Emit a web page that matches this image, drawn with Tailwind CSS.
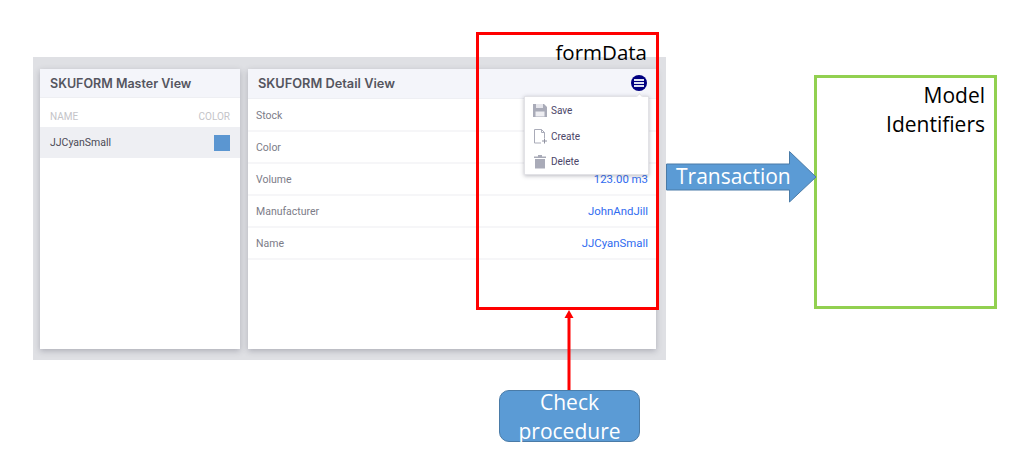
<!DOCTYPE html>
<html lang="en">
<head>
  <meta charset="UTF-8" />
  <title>SKUFORM</title>
  <script src="https://cdn.jsdelivr.net/npm/@tailwindcss/browser@4"></script>
</head>
<body class="bg-white">
  <div class="relative w-[1033px] h-[464px] overflow-hidden font-['Roboto',sans-serif]">

    <!-- screenshot panel -->
    <div class="absolute left-[33px] top-[57px] w-[633px] h-[303px] bg-[#dfe0e4] pl-[7px] pt-[12px] flex gap-[8px]">
      <section class="w-[200px] h-[280px] bg-white shadow-[0_2px_6px_rgba(60,60,80,0.3)]">
        <h2 class="h-[29px] pt-[3px] bg-[#f4f5fa] border-b border-[#eeeff3] px-[10px] flex items-center font-['Inter',sans-serif] font-semibold text-[12.5px] text-[#55555f]">SKUFORM Master View</h2>
        <div class="h-[29px] px-[10px] flex items-end justify-between pb-[3px] text-[10px] text-[#c4c4c8]">
          <span>NAME</span><span>COLOR</span>
        </div>
        <div class="h-[31px] bg-[#eeeff3] px-[10px] flex items-center justify-between text-[10.5px] text-[#4a4a55]">
          <span>JJCyanSmall</span>
          <span class="w-4 h-4 bg-[#5b96d1]"></span>
        </div>
      </section>

      <section class="w-[408px] h-[280px] bg-white shadow-[0_2px_6px_rgba(60,60,80,0.3)]">
        <h2 class="h-[30px] bg-[#f4f5fa] border-b border-[#eeeff3] px-[10px] flex items-center font-['Inter',sans-serif] font-semibold text-[12.8px] text-[#55555f]">SKUFORM Detail View</h2>
        <div class="mt-[1px] text-[10.5px]">
          <div class="h-[32px] pt-[2px] border-b-2 border-[#f6f6f8] pl-[8px] pr-[8px] flex items-center justify-between text-[#7c7c88]"><span>Stock</span></div>
          <div class="h-[32px] pt-[2px] border-b-2 border-[#f6f6f8] pl-[8px] pr-[8px] flex items-center justify-between text-[#7c7c88]"><span>Color</span></div>
          <div class="h-[32px] pt-[2px] border-b-2 border-[#f6f6f8] pl-[8px] pr-[8px] flex items-center justify-between text-[#7c7c88]"><span>Volume</span><span class="text-[#2f6bf0] text-[11.4px]">123.00 m3</span></div>
          <div class="h-[32px] pt-[2px] border-b-2 border-[#f6f6f8] pl-[8px] pr-[8px] flex items-center justify-between text-[#7c7c88]"><span>Manufacturer</span><span class="text-[#2f6bf0] text-[11.4px]">JohnAndJill</span></div>
          <div class="h-[32px] pt-[2px] border-b-2 border-[#f6f6f8] pl-[8px] pr-[8px] flex items-center justify-between text-[#7c7c88]"><span>Name</span><span class="text-[#2f6bf0] text-[11.4px]">JJCyanSmall</span></div>
        </div>
      </section>
    </div>

    <!-- menu button -->
    <span class="absolute left-[631px] top-[75px] w-4 h-4 rounded-full bg-[#000080] flex flex-col items-center justify-center gap-[1px]">
      <i class="block w-[10px] h-[2px] bg-[#dfe3f2]"></i>
      <i class="block w-[10px] h-[2px] bg-[#dfe3f2]"></i>
      <i class="block w-[10px] h-[2px] bg-[#dfe3f2]"></i>
    </span>

    <!-- dropdown -->
    <div class="absolute left-[524px] top-[96px] w-[125px] h-[79px] bg-white border border-[#e2e2e6] shadow-[0_1px_4px_rgba(60,60,80,0.35)] text-[10px] text-[#4b4668]">
      <span class="absolute right-[6px] -top-[3px] w-[5px] h-[5px] rotate-45 bg-white border-l border-t border-[#e2e2e6]"></span>
      <div class="h-[26px] pl-[8px] flex items-center gap-[4px]">
        <svg width="14" height="15" viewBox="0 0 14 15"><path d="M0 1h11l3 3v10H0z" fill="#a9abb8"/><rect x="3" y="1" width="7" height="4" fill="#e6e6ec"/><rect x="2.500" y="8.500" width="9" height="5" fill="#eeeef2"/></svg>
        <span>Save</span>
      </div>
      <div class="h-[26px] pl-[8px] flex items-center gap-[4px]">
        <svg width="14" height="15" viewBox="0 0 14 15" fill="none" stroke="#a9abb8"><path d="M8 14H1.500V.5h7l3 3V9"/><path d="M8.500.5v3h3"/><path d="M9 12h5M11.500 9.500v5" stroke="#8f91a0"/></svg>
        <span>Create</span>
      </div>
      <div class="h-[25px] pl-[8px] flex items-center gap-[4px]">
        <svg width="14" height="15" viewBox="0 0 14 15"><path d="M1 2.500h12v1.500H1z M5 1h4v1.500H5z" fill="#a9abb8"/><path d="M2 5h10v9.500H2z" fill="#a9abb8"/></svg>
        <span>Delete</span>
      </div>
    </div>

    <!-- red formData box -->
    <div class="absolute left-[476px] top-[32px] w-[183px] h-[278px] border-[3px] border-[#ff0000] text-right font-['Open_Sans',sans-serif] text-[20.5px] leading-[24px] text-black pr-[9px] pt-[5px]">formData</div>

    <!-- green identifiers box -->
    <div class="absolute left-[814px] top-[75px] w-[183px] h-[234px] border-[3px] border-[#92d050] text-right font-['Open_Sans',sans-serif] text-[21px] leading-[29px] text-black pr-[9px] pt-[3px]">Model<br>Identifiers</div>

    <!-- transaction arrow -->
    <svg class="absolute left-[666px] top-[150px]" width="152" height="54" viewBox="0 0 152 54">
      <path d="M.5 14h123V1.500L150 27 123.500 52V40H.5z" fill="#5b9bd5" stroke="#4a7ba7"/>
    </svg>
    <span class="absolute left-[676px] top-[163px] font-['Open_Sans',sans-serif] text-[21px] leading-[26px] text-white">Transaction</span>

    <!-- check arrow -->
    <svg class="absolute left-[562px] top-[309px]" width="14" height="82" viewBox="0 0 14 82">
      <path d="M7 9v72" stroke="#ff0000" stroke-width="3"/><path d="M7 1l4.500 8h-9z" fill="#ff0000"/>
    </svg>

    <!-- check procedure -->
    <div class="absolute left-[499px] top-[390px] w-[141px] h-[52px] rounded-[10px] bg-[#5b9bd5] border border-[#4a7ba7] text-white">
      <p class="-mt-[3px] text-center font-['Open_Sans',sans-serif] text-[21px] leading-[29px]">Check<br>procedure</p>
    </div>
  </div>
</body>
</html>
